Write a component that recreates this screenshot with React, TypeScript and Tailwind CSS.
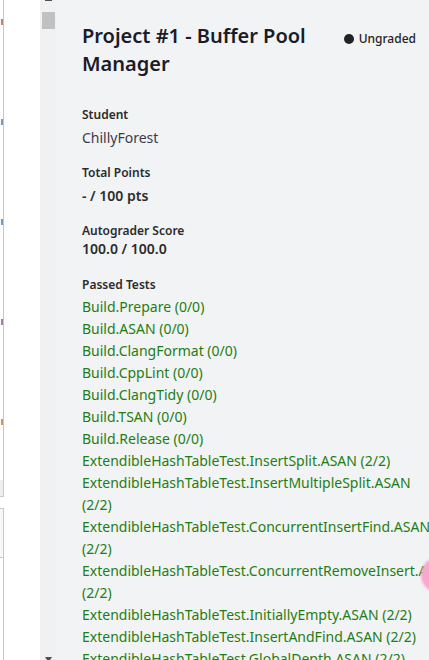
import React from 'react';

const tests: string[] = [
  'Build.Prepare (0/0)',
  'Build.ASAN (0/0)',
  'Build.ClangFormat (0/0)',
  'Build.CppLint (0/0)',
  'Build.ClangTidy (0/0)',
  'Build.TSAN (0/0)',
  'Build.Release (0/0)',
  'ExtendibleHashTableTest.InsertSplit.ASAN (2/2)',
  'ExtendibleHashTableTest.InsertMultipleSplit.ASAN (2/2)',
  'ExtendibleHashTableTest.ConcurrentInsertFind.ASAN (2/2)',
  'ExtendibleHashTableTest.ConcurrentRemoveInsert.ASAN (2/2)',
  'ExtendibleHashTableTest.InitiallyEmpty.ASAN (2/2)',
  'ExtendibleHashTableTest.InsertAndFind.ASAN (2/2)',
  'ExtendibleHashTableTest.GlobalDepth.ASAN (2/2)',
  'ExtendibleHashTableTest.LocalDepth.ASAN (2/2)',
];

// clipped glyph edges peeking from the left pane
const fragments = ['bg-[#b4492a]', 'bg-[#2f6fb5]', 'bg-[#2f6fb5]', 'bg-[#8a3f8f]', 'bg-[#b86a1c]'];

const App: React.FC = () => {
  return (
    <div className="flex h-[660px] w-[429px] overflow-hidden bg-white font-['Noto_Sans',sans-serif]">
      {/* Left pane edge */}
      <div className="flex w-[40px] shrink-0">
        <div className="flex w-[4px] flex-col">
          <div className="flex h-[480px] shrink-0 flex-col overflow-hidden border-r border-[#c8c8c8] pt-[19px]">
            {fragments.map((c, i) => (
              <div key={i} className="flex h-[100px] shrink-0 justify-end">
                <span className={`h-[6px] w-[2px] opacity-70 ${c}`}></span>
              </div>
            ))}
          </div>
          <div className="h-[17px] shrink-0 border-r border-b border-[#c8c8c8] bg-[#eeeeee]"></div>
          <div className="h-[11px] shrink-0"></div>
          <div className="h-[50px] shrink-0 border-y border-r border-[#c8c8c8] bg-[#f8f8f8]"></div>
          <div className="flex-1 border-r border-[#c8c8c8]"></div>
        </div>
      </div>

      {/* Scrollbar */}
      <div className="flex w-[16px] shrink-0 flex-col bg-[#f1f1f1]">
        <div className="ml-[5px] h-[1px] w-[7px] bg-[#505050]"></div>
        <div className="ml-[2px] mt-[11px] h-[17px] w-[13px] bg-[#c1c1c1]"></div>
        <div className="flex-1"></div>
        <svg className="ml-[5px]" width="7" height="3" viewBox="0 0 7 3">
          <polygon points="0,0 7,0 5,3 2,3" fill="#505050" />
        </svg>
      </div>

      {/* Submission panel */}
      <div className="relative flex-1 overflow-hidden bg-[#f2f3f5] pl-[26px] pr-[13px] pt-[22px]">
        <div className="flex items-start gap-4">
          <h1 className="flex-1 text-[20px] font-semibold leading-7 text-[#1b1b29]">
            Project #1 - Buffer Pool Manager
          </h1>
          <div className="mt-[9px] flex items-center gap-[5px] text-[12px] font-medium leading-4 text-[#222222]">
            <span className="h-[10px] w-[10px] rounded-full bg-[#222222]"></span>
            Ungraded
          </div>
        </div>

        <div className="mt-[29px] text-[12px] font-semibold leading-4 text-[#2b2b2b]">Student</div>
        <div className="mt-1 text-[14px] leading-[22px] text-[#3b3b4d]">ChillyForest</div>

        <div className="mt-4 text-[12px] font-semibold leading-4 text-[#2b2b2b]">Total Points</div>
        <div className="mt-1 text-[14px] font-semibold leading-[22px] text-[#2b2b2b]">- / 100 pts</div>

        <div className="mt-4 text-[12px] font-semibold leading-4 text-[#2b2b2b]">Autograder Score</div>
        <div className="text-[14px] font-semibold leading-5 text-[#2b2b2b]">100.0 / 100.0</div>

        <div className="mt-[18px] text-[12px] font-semibold leading-4 text-[#2b2b2b]">Passed Tests</div>
        <ul className="mt-[3px]">
          {tests.map((t) => (
            <li key={t} className="text-[14px] leading-[22px] text-[#1f7d14]">
              {t}
            </li>
          ))}
        </ul>

        {/* floating help bubble, mostly off-screen */}
        <div className="absolute left-[365px] top-[557px] h-9 w-9 rounded-full bg-[#f7a8cb] blur-[1px]"></div>
      </div>
    </div>
  );
};

export default App;
